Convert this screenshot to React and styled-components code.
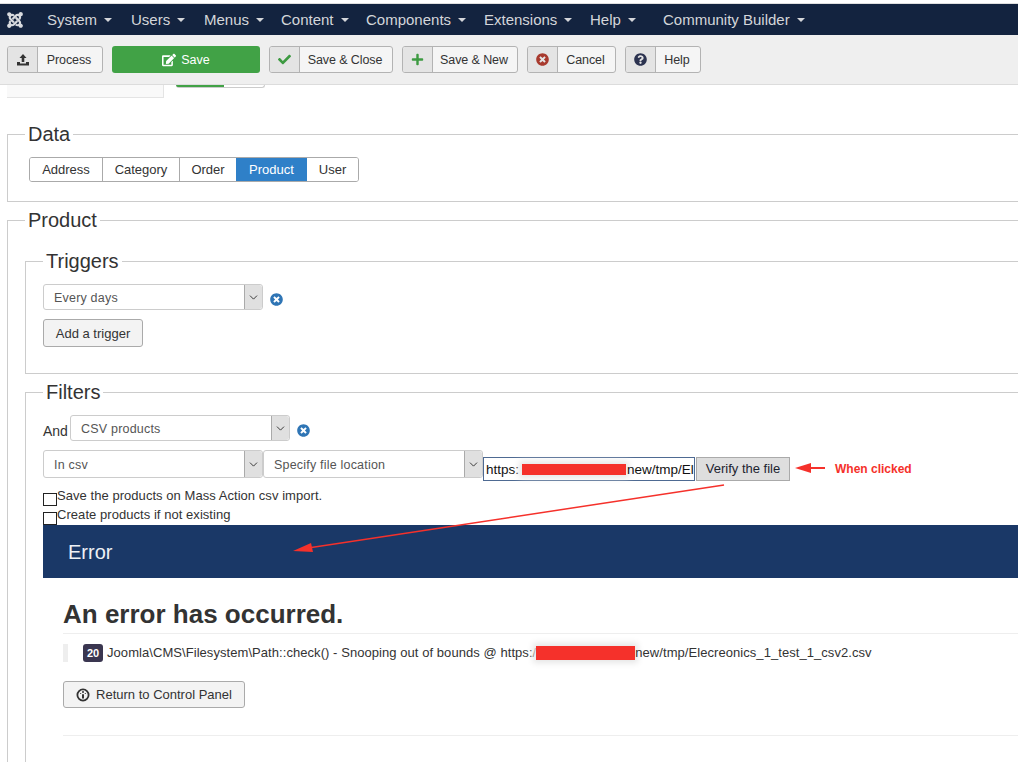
import styled, { createGlobalStyle } from "styled-components"
import { FaJoomla, FaCheck, FaPlus, FaTimesCircle, FaQuestionCircle, FaEdit } from "react-icons/fa"
import { ChevronDown } from "lucide-react"

const GlobalStyle = createGlobalStyle`
  html, body {
    margin: 0;
    background: #fff;
    font-family: "Liberation Sans", Arial, sans-serif;
    font-size: 13px;
    color: #333;
  }
`

const menuItems = [
  ["System", 84],
  ["Users", 73],
  ["Menus", 77],
  ["Content", 85],
  ["Components", 118],
  ["Extensions", 106],
  ["Help", 73],
  ["Community Builder"],
]

const Page = styled.div`
  position: relative;
  width: 1018px;
  height: 762px;
  overflow: hidden;
`

const TopStrip = styled.div`
  height: 3px;
  border-bottom: 1px solid #dfdfdf;
`

const Navbar = styled.nav`
  height: 31px;
  background: #13233f;
  display: flex;
  align-items: center;
  padding-left: 6px;
  color: #d4d6da;
  font-size: 15px;
`

const Logo = styled.span`
  display: flex;
  width: 41px;
  font-size: 18px;
  color: #d8dade;
`

const MenuItem = styled.span`
  display: flex;
  flex: none;
  align-items: center;
  gap: 7px;
  width: ${(p) => (p.$width ? `${p.$width}px` : "auto")};
  &::after {
    content: "";
    border-top: 4px solid #d4d6da;
    border-left: 4px solid transparent;
    border-right: 4px solid transparent;
  }
`

const Toolbar = styled.div`
  height: 50px;
  background: #efefef;
  border-bottom: 1px solid #dcdcdc;
  display: flex;
  align-items: flex-start;
  gap: 9px;
  padding: 11px 7px 0;
  box-sizing: border-box;
`

const ToolButton = styled.div`
  display: flex;
  width: ${(p) => p.$width}px;
  height: 27px;
  box-sizing: border-box;
  border: 1px solid #b3b3b3;
  border-radius: 3px;
  background: #f5f5f5;
  overflow: hidden;
  font-size: 12.5px;
  color: #333;
`

const ToolIcon = styled.span`
  width: 29px;
  flex: none;
  display: flex;
  align-items: center;
  justify-content: center;
  background: #e4e4e4;
  border-right: 1px solid #b3b3b3;
  color: ${(p) => p.$color || "#333"};
  font-size: 13px;
`

const ToolLabel = styled.span`
  flex: 1;
  display: flex;
  align-items: center;
  justify-content: center;
  padding-right: 2px;
  letter-spacing: -0.1px;
`

const SaveButton = styled.div`
  width: 148px;
  height: 27px;
  background: #41a246;
  border-radius: 3px;
  color: #fff;
  display: flex;
  align-items: center;
  justify-content: center;
  gap: 5px;
  font-size: 12.5px;
`

const Main = styled.main`
  padding: 0 7px;
`

const ClippedRow = styled.div`
  display: flex;
  height: 12px;
  margin-bottom: 25px;
`

const ClippedPanel = styled.div`
  width: 156px;
  height: 12px;
  background: #f9f9f9;
  border: solid #e4e4e4;
  border-width: 0 1px 1px 0;
`

const ClippedProgress = styled.div`
  width: 88px;
  height: 2px;
  margin-left: 12px;
  background: linear-gradient(to right, #41a246 0 48px, #fff 48px);
  border: solid #ccc;
  border-width: 0 1px 1px 0;
  border-radius: 0 0 3px 3px;
`

const Fieldset = styled.fieldset`
  min-width: 1120px;
  box-sizing: border-box;
  margin: ${(p) => p.$top ?? 6}px 0 0;
  padding: ${(p) => p.$pt ?? 11}px 0 ${(p) => p.$pb ?? 0}px 17px;
  border: 1px solid #ccc;
`

const Legend = styled.legend`
  padding: 0 3px;
  font-size: 20px;
  line-height: 24px;
  color: #333;
`

const ButtonGroup = styled.div`
  display: inline-flex;
  margin-left: 4px;
  height: 25px;
  box-sizing: border-box;
  border: 1px solid #aaa;
  border-radius: 3px;
  overflow: hidden;
  vertical-align: top;
`

const GroupItem = styled.span`
  display: flex;
  align-items: center;
  justify-content: center;
  width: ${(p) => p.$width}px;
  box-sizing: border-box;
  border-right: ${(p) => (p.$plain ? "none" : "1px solid #aaa")};
  background: ${(p) => (p.$active ? "#2f80c8" : "#fff")};
  color: ${(p) => (p.$active ? "#fff" : "#333")};
`

const SelectBox = styled.div`
  display: flex;
  width: 220px;
  height: ${(p) => p.$height || 26}px;
  flex: none;
  box-sizing: border-box;
  border: 1px solid #ccc;
  border-radius: 3px;
  color: #555;
  font-size: 12.5px;
  letter-spacing: 0.2px;
`

const SelectValue = styled.span`
  flex: 1;
  display: flex;
  align-items: center;
  padding: 1px 0 0 10px;
`

const SelectArrow = styled.span`
  width: 17px;
  flex: none;
  display: flex;
  align-items: center;
  justify-content: center;
  background: #e0e0e0;
  border-left: 1px solid #aaa;
  border-radius: 0 3px 3px 0;
  color: #222;
`

const Select = ({ value, height }) => (
  <SelectBox $height={height}>
    <SelectValue>{value}</SelectValue>
    <SelectArrow>
      <ChevronDown size={13} strokeWidth={1.6} />
    </SelectArrow>
  </SelectBox>
)

const RemoveIcon = styled(FaTimesCircle)`
  color: #2f75b5;
  font-size: 13px;
  flex: none;
  margin: 0 0 4px 7px;
`

const Row = styled.div`
  display: flex;
  align-items: ${(p) => p.$align || "flex-start"};
  margin-top: ${(p) => p.$top || 0}px;
`

const AddButton = styled.div`
  display: flex;
  width: 100px;
  height: 28px;
  box-sizing: border-box;
  margin: 9px 0 26px;
  align-items: center;
  justify-content: center;
  border: 1px solid #aaa;
  border-radius: 3px;
  background: #f3f3f3;
  color: #333;
`

const AndLabel = styled.span`
  width: 27px;
  margin-bottom: 2px;
  font-size: 14px;
  line-height: 16px;
`

const UrlField = styled.div`
  width: 212px;
  height: 24px;
  margin: 7px 1px 0 0;
  box-sizing: border-box;
  display: flex;
  align-items: center;
  padding-left: 2px;
  border: 1px solid #4e6a92;
  color: #111;
  font-size: 13.5px;
  white-space: nowrap;
`

const Redacted = styled.span`
  display: inline-block;
  flex: none;
  width: ${(p) => p.$width}px;
  height: ${(p) => p.$height}px;
  margin: 0 ${(p) => p.$right || 0}px 0 ${(p) => p.$left || 0}px;
  background: #f5312b;
  box-shadow: 0 0 6px 3px #e6e6e6;
`

const VerifyButton = styled.div`
  width: 94px;
  height: 24px;
  margin-top: 7px;
  padding-bottom: 1px;
  box-sizing: border-box;
  display: flex;
  align-items: center;
  justify-content: center;
  background: #dedede;
  border: 1px solid #aaa;
  color: #1c2430;
`

const WhenClicked = styled.span`
  margin: 11px 0 0 45px;
  font-size: 12px;
  line-height: 16px;
  font-weight: 700;
  color: #f5312b;
`

const CheckGroup = styled.div`
  margin-top: 6px;
`

const CheckRow = styled.label`
  display: flex;
  height: 19px;
  letter-spacing: 0.05px;
  line-height: 18px;
`

const CheckBox = styled.input`
  appearance: none;
  width: 14px;
  height: 13px;
  margin: 6px 0 0;
  flex: none;
  background: #fff;
  border: 1px solid #222;
  border-radius: 0;
`

const ErrorBar = styled.div`
  height: 53px;
  box-sizing: border-box;
  display: flex;
  align-items: center;
  padding: 1px 0 0 25px;
  background: #1a3867;
  color: #eef1f5;
  font-size: 20px;
`

const ErrorBody = styled.div`
  padding: 21px 0 60px 20px;
`

const ErrorTitle = styled.h1`
  margin: 0;
  padding-bottom: 4px;
  font-size: 26px;
  line-height: 30px;
  font-weight: 700;
  color: #333;
  border-bottom: 1px solid #eee;
`

const Message = styled.div`
  display: flex;
  align-items: center;
  margin-top: 10px;
  height: 18px;
  border-left: 5px solid #eee;
  padding-left: 15px;
  gap: 4px;
  color: #333;
  white-space: nowrap;
`

const Badge = styled.span`
  width: 20px;
  height: 18px;
  flex: none;
  display: flex;
  align-items: center;
  justify-content: center;
  background: #3a3650;
  border-radius: 3px;
  color: #fff;
  font-size: 11px;
  font-weight: 700;
`

const MessageText = styled.span`
  display: flex;
  align-items: center;
  padding-bottom: 1px;
  letter-spacing: 0.06px;
`

const ReturnButton = styled.div`
  display: flex;
  width: 182px;
  height: 27px;
  box-sizing: border-box;
  margin-top: 19px;
  align-items: center;
  justify-content: center;
  gap: 6px;
  border: 1px solid #aaa;
  border-radius: 3px;
  background: #f3f3f3;
  color: #333;
`

const Rule = styled.div`
  margin-top: 27px;
  border-top: 1px solid #eee;
`

const Annotations = styled.svg`
  position: absolute;
  inset: 0;
  pointer-events: none;
`

const UploadIcon = () => (
  <svg width="14" height="14" viewBox="0 0 14 14" fill="currentColor">
    <path d="M7 1 L10.5 5 H8.3 V9 H5.7 V5 H3.5 Z" />
    <path d="M1 9 H4 V10.5 H10 V9 H13 V12.5 H1 Z" />
  </svg>
)

const DashIcon = () => (
  <svg width="14" height="14" viewBox="0 0 14 14" fill="none" stroke="currentColor">
    <circle cx="7" cy="7" r="5.6" strokeWidth="1.8" />
    <path d="M7 6.2 V10.4" strokeWidth="2" />
    <path d="M7 3.2 V4.8" strokeWidth="2" />
    <path d="M4.2 5 L5.2 6 M9.8 5 L8.8 6" strokeWidth="1" />
  </svg>
)

const App = () => {
  return (
    <Page>
      <GlobalStyle />
      <TopStrip />
      <Navbar>
        <Logo>
          <FaJoomla />
        </Logo>
        {menuItems.map(([name, width]) => (
          <MenuItem key={name} $width={width}>
            {name}
          </MenuItem>
        ))}
      </Navbar>
      <Toolbar>
        <ToolButton $width={96}>
          <ToolIcon>
            <UploadIcon />
          </ToolIcon>
          <ToolLabel>Process</ToolLabel>
        </ToolButton>
        <SaveButton>
          <FaEdit size={14} />
          Save
        </SaveButton>
        <ToolButton $width={124}>
          <ToolIcon $color="#3d9a41">
            <FaCheck />
          </ToolIcon>
          <ToolLabel>Save &amp; Close</ToolLabel>
        </ToolButton>
        <ToolButton $width={116}>
          <ToolIcon $color="#3d9a41">
            <FaPlus />
          </ToolIcon>
          <ToolLabel>Save &amp; New</ToolLabel>
        </ToolButton>
        <ToolButton $width={89}>
          <ToolIcon $color="#a83a2e">
            <FaTimesCircle />
          </ToolIcon>
          <ToolLabel>Cancel</ToolLabel>
        </ToolButton>
        <ToolButton $width={76}>
          <ToolIcon $color="#2c3350">
            <FaQuestionCircle />
          </ToolIcon>
          <ToolLabel>Help</ToolLabel>
        </ToolButton>
      </Toolbar>
      <Main>
        <ClippedRow>
          <ClippedPanel />
          <ClippedProgress />
        </ClippedRow>
        <Fieldset $top={0} $pb={19}>
          <Legend>Data</Legend>
          <ButtonGroup>
            <GroupItem $width={73}>Address</GroupItem>
            <GroupItem $width={77}>Category</GroupItem>
            <GroupItem $width={56} $plain>
              Order
            </GroupItem>
            <GroupItem $width={71} $active $plain>
              Product
            </GroupItem>
            <GroupItem $width={51} $plain>
              User
            </GroupItem>
          </ButtonGroup>
        </Fieldset>
        <Fieldset $pt={17}>
          <Legend>Product</Legend>
          <Fieldset $top={0}>
            <Legend>Triggers</Legend>
            <Row $align="flex-end">
              <Select value="Every days" />
              <RemoveIcon />
            </Row>
            <AddButton>Add a trigger</AddButton>
          </Fieldset>
          <Fieldset>
            <Legend>Filters</Legend>
            <Row $align="flex-end">
              <AndLabel>And</AndLabel>
              <Select value="CSV products" />
              <RemoveIcon />
            </Row>
            <Row $top={9}>
              <Select value="In csv" height={28} />
              <Select value="Specify file location" height={28} />
              <UrlField>
                https:
                <Redacted $width={104} $height={11} $left={3} $right={1} />
                new/tmp/El
              </UrlField>
              <VerifyButton>Verify the file</VerifyButton>
              <WhenClicked>When clicked</WhenClicked>
            </Row>
            <CheckGroup>
              <CheckRow>
                <CheckBox type="checkbox" />
                Save the products on Mass Action csv import.
              </CheckRow>
              <CheckRow>
                <CheckBox type="checkbox" />
                Create products if not existing
              </CheckRow>
            </CheckGroup>
            <ErrorBar>Error</ErrorBar>
            <ErrorBody>
              <ErrorTitle>An error has occurred.</ErrorTitle>
              <Message>
                <Badge>20</Badge>
                <MessageText>
                  Joomla\CMS\Filesystem\Path::check() - Snooping out of bounds @ https:/
                  <Redacted $width={99} $height={14} />
                  new/tmp/Elecreonics_1_test_1_csv2.csv
                </MessageText>
              </Message>
              <ReturnButton>
                <DashIcon />
                Return to Control Panel
              </ReturnButton>
              <Rule />
            </ErrorBody>
          </Fieldset>
        </Fieldset>
      </Main>
      <Annotations width="1018" height="762">
        <path d="M825 468 H808" stroke="#f5312b" strokeWidth="2" />
        <path d="M795 468 L811 463 V473 Z" fill="#f5312b" />
        <path d="M724 485 L308 548" stroke="#f5312b" strokeWidth="1.5" />
        <path d="M293 551 L311 543 L313 552 Z" fill="#f5312b" />
      </Annotations>
    </Page>
  )
}

export default App
